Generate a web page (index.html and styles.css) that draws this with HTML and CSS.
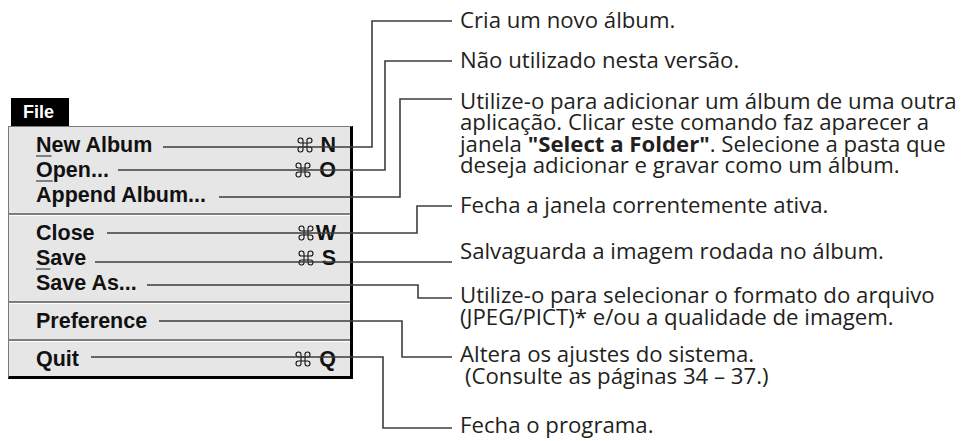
FILE: index.html
```html
<!doctype html>
<html lang=pt>
<head>
	<meta charset=utf-8>
	<title>Menu File</title>
	<link rel="stylesheet" href="styles.css">
</head>
<body>
	<!-- command key symbol, reused by every shortcut -->
	<svg width="0" height="0" class="defs">
		<symbol id="cmd" viewBox="0 0 16 16">
			<path d="M6 3.5V12.5A2.5 2.5 0 1 1 3.5 10H12.5A2.5 2.5 0 1 1 10 12.5V3.5A2.5 2.5 0 1 1 12.5 6H3.5A2.5 2.5 0 1 1 6 3.5Z"/>
		</symbol>
	</svg>

	<div class="sheet">
		<div class="menucol">
			<div class="title">File</div>
			<div class="menu">
				<div class="group">
					<div class="item"><span><u>N</u>ew Album</span><span class="key"><svg class="cmd"><use href="#cmd"/></svg> N</span></div>
					<div class="item"><span><u>O</u>pen...</span><span class="key"><svg class="cmd"><use href="#cmd"/></svg> O</span></div>
					<div class="item"><span>Append Album...</span></div>
				</div>
				<div class="group">
					<div class="item"><span>Close</span><span class="key"><svg class="cmd"><use href="#cmd"/></svg>W</span></div>
					<div class="item"><span><u>S</u>ave</span><span class="key"><svg class="cmd"><use href="#cmd"/></svg> S</span></div>
					<div class="item"><span>Save As...</span></div>
				</div>
				<div class="group">
					<div class="item"><span>Preference</span></div>
				</div>
				<div class="group">
					<div class="item"><span>Quit</span><span class="key"><svg class="cmd"><use href="#cmd"/></svg> Q</span></div>
				</div>
			</div>
		</div>

		<div class="notes">
			<p class="n1">Cria um novo álbum.</p>
			<p class="n2">Não utilizado nesta versão.</p>
			<p class="n3">Utilize-o para adicionar um álbum de uma outra<br>aplicação. Clicar este comando faz aparecer a<br>janela <b>"Select a Folder"</b>. Selecione a pasta que<br>deseja adicionar e gravar como um álbum.</p>
			<p class="n4">Fecha a janela correntemente ativa.</p>
			<p class="n5">Salvaguarda a imagem rodada no álbum.</p>
			<p class="n6">Utilize-o para selecionar o formato do arquivo<br>(JPEG/PICT)* e/ou a qualidade de imagem.</p>
			<p class="n7">Altera os ajustes do sistema.<br><span class="indent">(Consulte as páginas 34 – 37.)</span></p>
			<p class="n8">Fecha o programa.</p>
		</div>

		<!-- leader lines from each command to its note -->
		<svg class="leaders" width="974" height="441" viewBox="0 0 974 441">
			<path d="M163 147H372V21H452"/>
			<path d="M118 170H385V61H452"/>
			<path d="M219 197H400V99H452"/>
			<path d="M107 233H417V206H452"/>
			<path d="M95 262H452"/>
			<path d="M147 285H418V298H452"/>
			<path d="M159 321H402V357H452"/>
			<path d="M91 357H383V428H452"/>
		</svg>
	</div>
</body>
</html>
```

FILE: styles.css
```css
body	{ margin:0; background:#fff; }
.defs	{ position:absolute; }
.sheet	{ position:relative; display:flex; width:974px; height:441px; overflow:hidden; }

/* the File menu */
.menucol { flex:none; padding:98px 0 0 8px; }
.title	{ margin-left:3px; width:58px; height:28px; box-sizing:border-box;
		  padding-left:12px; background:#000; color:#fff;
		  font:bold 18px/28px "Liberation Sans", Arial, sans-serif;
		}
.menu	{ width:345px; box-sizing:border-box; background:#e6e6e6; color:#111;
		  border-top:1px solid #7a7a7a; border-left:1px solid #7a7a7a;
		  border-right:3px solid #000; border-bottom:3px solid #000;
		  font:bold 21.5px/25px "Liberation Sans", Arial, sans-serif;
		}
.group	{ padding:6px 14px 5px 27px; }
.group + .group { border-top:2px solid #7d7d7d; box-shadow:inset 0 1px 0 #fff; }
.group:last-child { padding-bottom:4px; }
.item	{ display:flex; justify-content:space-between; white-space:nowrap; }
.item u	{ text-decoration-color:#808080; text-decoration-thickness:2px; text-underline-offset:3px; }
.cmd	{ width:16px; height:16px; margin-right:2px; vertical-align:-1px;
		  fill:none; stroke:#111; stroke-width:1.1; }

/* the notes on the right */
.notes	{ margin-left:107px; padding-top:9px; color:#231f20;
		  font:22.2px/21.5px "Open Sans", sans-serif;
		}
.notes p { margin:0; white-space:nowrap; }
.notes b { font-weight:700; }
.n2 { margin-top:18px !important; }
.n3 { margin-top:19.5px !important; }
.n4 { margin-top:18px !important; }
.n5 { margin-top:25px !important; }
.n6 { margin-top:22.5px !important; }
.n7 { margin-top:16px !important; }
.n8 { margin-top:28px !important; }
.indent { padding-left:5px; }

.leaders { position:absolute; left:0; top:0; fill:none; stroke:#3c3c3c; stroke-width:1.6; }
```
